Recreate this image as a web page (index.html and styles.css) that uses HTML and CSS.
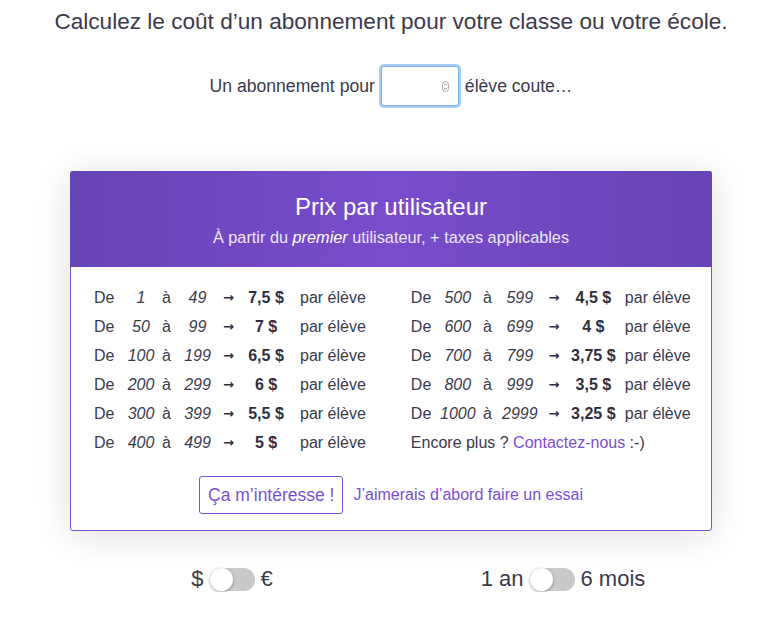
FILE: index.html
```html
<!DOCTYPE html>
<html lang="fr">
<head>
    <meta charset="UTF-8">
    <title>Tarifs</title>
    <link rel="stylesheet" href="styles.css">
</head>
<body>
    <div class="page">
        <h1 class="title">Calculez le coût d’un abonnement pour votre classe ou votre école.</h1>

        <div class="calc">
            <span>Un abonnement pour</span>
            <span class="num-input">
                <span class="spin">
                    <svg width="7" height="11" viewBox="0 0 7 11">
                        <rect x="0.5" y="0.5" width="6" height="10" rx="3" fill="none" stroke="#9a9aa0" stroke-width="0.8"/>
                        <path d="M2 4.2 L3.5 2.7 L5 4.2" fill="none" stroke="#777" stroke-width="0.8"/>
                        <path d="M2 6.8 L3.5 8.3 L5 6.8" fill="none" stroke="#777" stroke-width="0.8"/>
                    </svg>
                </span>
            </span>
            <span>élève coute…</span>
        </div>

        <div class="card">
            <div class="card-head">
                <div class="card-title">Prix par utilisateur</div>
                <div class="card-sub">À partir du <em>premier</em> utilisateur, + taxes applicables</div>
            </div>
            <div class="card-body">
                <div class="prices">
                    <div class="grid grid-left">
                        <span class="de">De</span><i>1</i><span>à</span><i>49</i><span class="arr">→</span><b>7,5 $</b><span class="par">par élève</span>
                        <span class="de">De</span><i>50</i><span>à</span><i>99</i><span class="arr">→</span><b>7 $</b><span class="par">par élève</span>
                        <span class="de">De</span><i>100</i><span>à</span><i>199</i><span class="arr">→</span><b>6,5 $</b><span class="par">par élève</span>
                        <span class="de">De</span><i>200</i><span>à</span><i>299</i><span class="arr">→</span><b>6 $</b><span class="par">par élève</span>
                        <span class="de">De</span><i>300</i><span>à</span><i>399</i><span class="arr">→</span><b>5,5 $</b><span class="par">par élève</span>
                        <span class="de">De</span><i>400</i><span>à</span><i>499</i><span class="arr">→</span><b>5 $</b><span class="par">par élève</span>
                    </div>
                    <div class="grid grid-right">
                        <span class="de">De</span><i>500</i><span>à</span><i>599</i><span class="arr">→</span><b>4,5 $</b><span class="par">par élève</span>
                        <span class="de">De</span><i>600</i><span>à</span><i>699</i><span class="arr">→</span><b>4 $</b><span class="par">par élève</span>
                        <span class="de">De</span><i>700</i><span>à</span><i>799</i><span class="arr">→</span><b>3,75 $</b><span class="par">par élève</span>
                        <span class="de">De</span><i>800</i><span>à</span><i>999</i><span class="arr">→</span><b>3,5 $</b><span class="par">par élève</span>
                        <span class="de">De</span><i>1000</i><span>à</span><i>2999</i><span class="arr">→</span><b>3,25 $</b><span class="par">par élève</span>
                        <span class="more">Encore plus ? <a href="#">Contactez-nous</a> :-)</span>
                    </div>
                </div>
                <div class="actions">
                    <a href="#" class="btn">Ça m’intéresse !</a>
                    <a href="#" class="link">J’aimerais d’abord faire un essai</a>
                </div>
            </div>
        </div>

        <div class="switches">
            <div class="switch-group">
                <span>$</span><span class="toggle"></span><span>€</span>
            </div>
            <div class="switch-group right">
                <span>1 an</span><span class="toggle"></span><span>6 mois</span>
            </div>
        </div>
    </div>
</body>
</html>
```

FILE: styles.css
```css
* {
    margin: 0;
    padding: 0;
    box-sizing: border-box;
}
body {
    background: #fff;
    color: #3b3a4c;
    font-family: "Liberation Sans", Arial, sans-serif;
}
.page {
    width: 782px;
    padding-top: 8px;
}
.title {
    font-size: 22.6px;
    font-weight: normal;
    text-align: center;
    line-height: 28px;
}
.calc {
    margin-top: 30px;
    display: flex;
    justify-content: center;
    align-items: center;
    gap: 5px;
    font-size: 17.6px;
}
.num-input {
    width: 78px;
    height: 40px;
    border: 1px solid #7fb0f2;
    border-radius: 3px;
    box-shadow: 0 0 0 2px #a8cdf8;
    background: #fff;
    display: flex;
    align-items: center;
    justify-content: flex-end;
    padding-right: 9px;
    margin: 0 1px;
}
.spin svg {
    display: block;
}
.card {
    width: 642px;
    margin: 65px auto 0;
    border: 1px solid #7a52d6;
    border-radius: 3px;
    box-shadow: 0 4px 38px rgba(0, 0, 0, 0.13);
    background: #fff;
}
.card-head {
    height: 96px;
    margin: -1px -1px 0;
    border-radius: 3px 3px 0 0;
    background: linear-gradient(90deg, #6744b5 0%, #784dcc 50%, #6744b5 100%);
    color: #fff;
    text-align: center;
    padding-top: 22px;
}
.card-title {
    font-size: 24px;
    line-height: 28px;
}
.card-sub {
    margin-top: 6px;
    font-size: 16.3px;
    line-height: 20px;
    color: #ece6fa;
}
.card-sub em {
    color: #fff;
}
.card-body {
    padding: 16px 0 16px;
}
.prices {
    display: flex;
}
.grid {
    display: grid;
    grid-auto-rows: 29px;
    align-items: center;
    font-size: 16px;
}
.grid-left {
    margin-left: 23px;
    grid-template-columns: 28px 38px 13px 49px 13px 62px auto;
}
.grid-right {
    margin-left: 45px;
    grid-template-columns: 28px 38px 21px 44px 24px 55px auto;
}
.grid > * {
    text-align: center;
    white-space: nowrap;
}
.grid i {
    font-style: italic;
}
.grid b {
    font-weight: bold;
    color: #2f2e3f;
}
.grid .arr {
    font-family: "DejaVu Sans", sans-serif;
    font-size: 13px;
    font-weight: bold;
    color: #2f2e3f;
}
.grid .de {
    text-align: left;
}
.grid .par {
    text-align: left;
    padding-left: 3px;
}
.grid-right .par {
    padding-left: 4px;
}
.grid .more {
    grid-column: 1 / -1;
    text-align: left;
}
a {
    color: #7a4fd6;
    text-decoration: none;
}
.actions {
    margin-top: 19px;
    display: flex;
    justify-content: center;
    align-items: center;
    gap: 10px;
    font-size: 16px;
}
.btn {
    height: 38px;
    padding: 0 8px;
    border: 1px solid #7a52d6;
    border-radius: 3px;
    display: flex;
    align-items: center;
    font-size: 17.5px;
}
.switches {
    width: 642px;
    margin: 35px auto 0;
    display: flex;
    font-size: 22px;
}
.switch-group {
    flex: 1;
    display: flex;
    justify-content: center;
    align-items: center;
    gap: 6px;
    padding-left: 13px;
}
.switch-group.right {
    padding-left: 33px;
}
.toggle {
    width: 45px;
    height: 23px;
    border-radius: 12px;
    background: #c9c9c9;
    position: relative;
}
.toggle::after {
    content: "";
    position: absolute;
    left: 0;
    top: 0;
    width: 23px;
    height: 23px;
    border-radius: 50%;
    background: #fff;
    box-shadow: 0 1px 3px rgba(0, 0, 0, 0.35);
}
```
